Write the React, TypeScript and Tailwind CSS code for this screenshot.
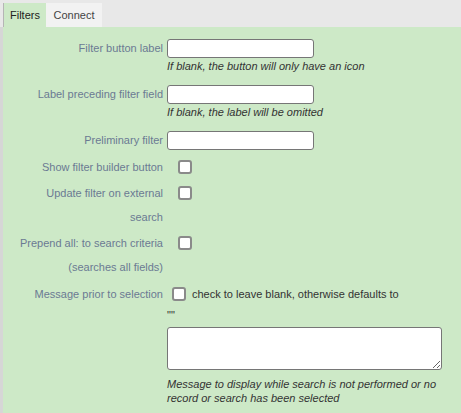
export default function App() {
  const label = "w-[165px] shrink-0 pr-[5px] text-right text-[#6b7a93]";
  const box =
    "appearance-none block w-[14px] h-[14px] border-2 border-[#8a8a8a] rounded-[3px] bg-white";

  return (
    <div className="w-[461px] h-[413px] overflow-hidden bg-[#e8e8e8] font-['Liberation_Sans',Arial,sans-serif] text-[11px]">
      {/* tabs */}
      <div className="flex h-[27px] items-end pl-[3px]">
        <div className="h-[24px] w-[43px] flex items-center justify-center bg-[#cde9c7] border-l border-[#b5b5b5] text-[#222]">
          Filters
        </div>
        <div className="h-[24px] w-[56px] flex items-center justify-center bg-[#f2f2f2] text-[#444]">
          Connect
        </div>
      </div>

      {/* panel */}
      <div className="h-[386px] bg-[#cde9c7] border-l-[3px] border-[#d6d6d6] pt-[12px]">
        <div className="flex">
          <div className={`${label} leading-[19px]`}>Filter button label</div>
          <div className="-ml-[1px]">
            <input className="block w-[147px] h-[19px] border border-[#767676] rounded-[3px] bg-white" />
            <div className="italic text-[#333] leading-[14px] mt-[1px]">
              If blank, the button will only have an icon
            </div>
          </div>
        </div>

        <div className="flex mt-[12px]">
          <div className={`${label} leading-[19px]`}>Label preceding filter field</div>
          <div className="-ml-[1px]">
            <input className="block w-[147px] h-[19px] border border-[#767676] rounded-[3px] bg-white" />
            <div className="italic text-[#333] leading-[14px] mt-[1px]">
              If blank, the label will be omitted
            </div>
          </div>
        </div>

        <div className="flex mt-[12px]">
          <div className={`${label} leading-[19px]`}>Preliminary filter</div>
          <div className="-ml-[1px]">
            <input className="block w-[147px] h-[19px] border border-[#767676] rounded-[3px] bg-white" />
          </div>
        </div>

        <div className="flex mt-[5px] leading-[24px]">
          <div className={label}>Show filter builder button</div>
          <div className="pl-[10px] pt-[5px]">
            <input type="checkbox" className={box} />
          </div>
        </div>

        <div className="flex mt-[2px] leading-[24px]">
          <div className={`${label} pl-[20px]`}>Update filter on external search</div>
          <div className="pl-[10px] pt-[5px]">
            <input type="checkbox" className={box} />
          </div>
        </div>

        <div className="flex mt-[2px] leading-[24px]">
          <div className={`${label} pl-[10px]`}>Prepend all: to search criteria (searches all fields)</div>
          <div className="pl-[10px] pt-[5px]">
            <input type="checkbox" className={box} />
          </div>
        </div>

        <div className="flex mt-[3px]">
          <div className={`${label} leading-[24px]`}>Message prior to selection</div>
          <div className="-ml-[1px]">
            <div className="flex items-center h-[24px] pl-[5px]">
              <input type="checkbox" className={box} />
              <span className="ml-[6px] text-[#333]">check to leave blank, otherwise defaults to</span>
            </div>
            <div className="pt-[2px] leading-[14px] text-[#333]">""</div>
            <textarea className="block mt-[5px] w-[275px] h-[43px] border border-[#767676] rounded-[3px] bg-white" />
            <div className="mt-[7px] italic text-[#333] leading-[14px] w-[280px]">
              Message to display while search is not performed or no record or search has been selected
            </div>
          </div>
        </div>
      </div>
    </div>
  );
}
